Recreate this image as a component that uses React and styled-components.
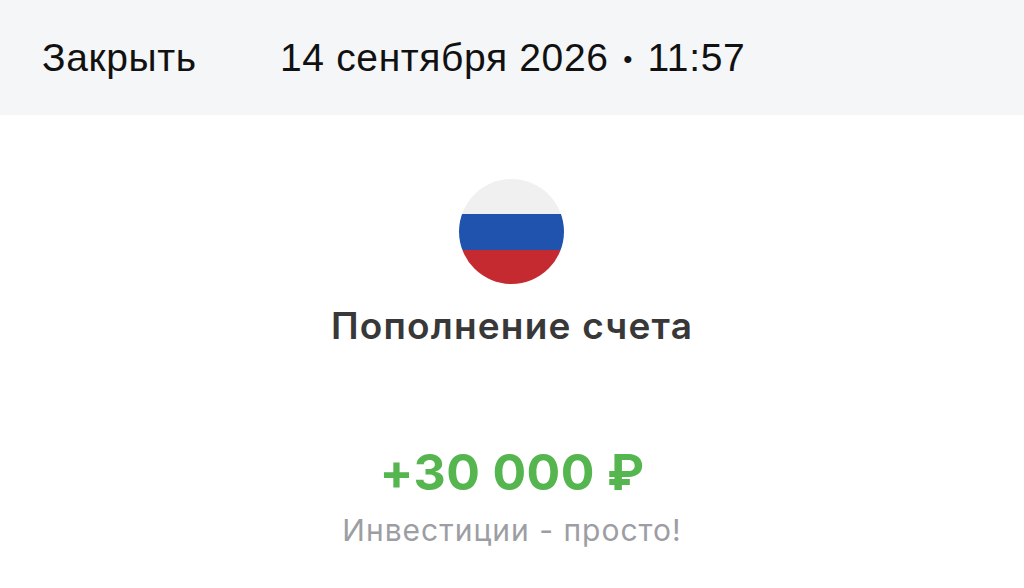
import styled, { createGlobalStyle } from "styled-components";

const Global = createGlobalStyle`
  html, body { margin: 0; padding: 0; background: #fff; }
  body { font-family: "Inter", "Liberation Sans", sans-serif; overflow: hidden; }
`;

const Page = styled.div`
  width: 1024px;
  height: 588px;
  overflow: hidden;
  display: flex;
  flex-direction: column;
`;

const TopBar = styled.header`
  height: 115px;
  flex: none;
  background: #f5f6f8;
  display: flex;
  align-items: center;
  padding: 1px 0 0 42px;
  box-sizing: border-box;
  font-family: "Liberation Sans", sans-serif;
  font-size: 39px;
  letter-spacing: 0.65px;
  color: #111;
`;

const CloseLabel = styled.span`
  width: 238px;
`;

const DateLabel = styled.span``;

const Dot = styled.span`
  font-size: 26px;
  margin: 0 3px;
  vertical-align: 3px;
`;

const Body = styled.main`
  display: flex;
  flex-direction: column;
  align-items: center;
  padding-top: 64px;
`;

const Flag = styled.div`
  width: 105px;
  height: 105px;
  margin-right: 1px;
  border-radius: 50%;
  overflow: hidden;
  background: linear-gradient(
    #f0f0f0 0 33%,
    #2053ae 33% 67.5%,
    #c42a30 67.5% 100%
  );
`;

const Title = styled.h1`
  margin: 19px 0 0;
  font-size: 37px;
  line-height: 46px;
  font-weight: 600;
  letter-spacing: 1.2px;
  color: #383838;
`;

const Amount = styled.div`
  margin-top: 93px;
  font-size: 50px;
  line-height: 60px;
  font-weight: 700;
  letter-spacing: 0.4px;
  color: #55b54e;
`;

const Note = styled.div`
  margin-top: 9px;
  font-size: 30px;
  line-height: 38px;
  letter-spacing: 1px;
  color: #9c9ea3;
`;

export default function App() {
  return (
    <Page>
      <Global />
      <TopBar>
        <CloseLabel>Закрыть</CloseLabel>
        <DateLabel>14 сентября 2026 <Dot>•</Dot> 11:57</DateLabel>
      </TopBar>
      <Body>
        <Flag />
        <Title>Пополнение счета</Title>
        <Amount>+30 000 ₽</Amount>
        <Note>Инвестиции - просто!</Note>
      </Body>
    </Page>
  );
}
